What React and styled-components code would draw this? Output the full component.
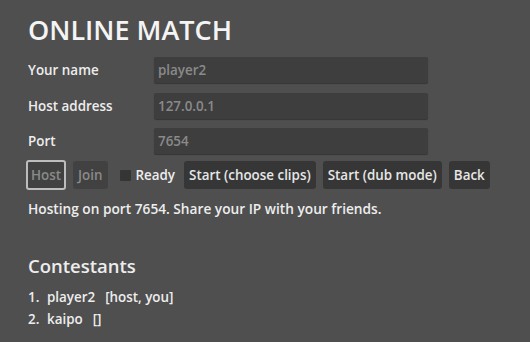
import React from 'react'
import styled, { createGlobalStyle } from 'styled-components';

const Global = createGlobalStyle`
  html, body {
    margin: 0;
    background: #4f4f4f;
    font-family: 'Open Sans', sans-serif;
    color: #ededed;
  }
`;

const Page = styled.div`
  padding: 8px 28px 0;
  display: flex;
  flex-direction: column;
`;

const Title = styled.h1`
  margin: 0 0 5px;
  font-size: 27px;
  font-weight: 600;
  line-height: 44px;
  color: #f4f4f4;
`;

const Form = styled.div`
  display: grid;
  grid-template-columns: 126px 274px;
  row-gap: 9.5px;
  align-items: center;
`;

const Label = styled.label`
  font-size: 13.4px;
  font-weight: 600;
`;

const Input = styled.input`
  height: 26px;
  box-sizing: border-box;
  border: none;
  border-radius: 2px;
  background: #3e3e3e;
  box-shadow: 0 1px 1px #353535;
  color: #8a8a8a;
  font-family: inherit;
  font-size: 13.4px;
  font-weight: 600;
  padding: 0 4px;
  outline: none;
`;

const Toolbar = styled.div`
  display: flex;
  align-items: center;
  gap: 7px;
  margin: 6px 0 0 -2px;
`;

const Button = styled.button`
  box-sizing: border-box;
  border: ${p => p.$selected ? '2px solid #bdbdbd' : 'none'};
  border-radius: 3px;
  background: ${p => p.$disabled ? '#414141' : '#363636'};
  color: ${p => p.$disabled ? '#8a8a8a' : '#e6e6e6'};
  font-family: inherit;
  font-size: 13.4px;
  font-weight: 600;
  padding: 0 ${p => p.$selected ? '3px' : '5px'};
  height: ${p => p.$selected ? '30px' : '28px'};
`;

const Check = styled.label`
  display: flex;
  align-items: center;
  gap: 5px;
  font-size: 13.4px;
  font-weight: 600;
  margin: 0 2px 0 5px;
`;

const Box = styled.span`
  width: 11px;
  height: 11px;
  background: #353535;
  border-radius: 1px;
`;

const Status = styled.p`
  margin: 9px 0 0;
  font-size: 13.7px;
  font-weight: 600;
`;

const SubTitle = styled.h2`
  margin: 35px 0 10px;
  font-size: 18.5px;
  font-weight: 600;
`;

const List = styled.ol`
  margin: 0;
  padding: 0;
  list-style: none;
  display: flex;
  flex-direction: column;
  gap: 4px;
  font-size: 13.4px;
  font-weight: 600;
`;

const Item = styled.li`
  display: flex;
`;

const Num = styled.span`
  width: 19px;
`;

const Tag = styled.span`
  margin-left: 10px;
`;

const contestants = [
  { name: 'player2', tags: 'host, you' },
  { name: 'kaipo', tags: '' },
];

const App = () => (
  <>
    <Global />
    <Page>
      <Title>ONLINE MATCH</Title>
      <Form>
        <Label>Your name</Label>
        <Input defaultValue="player2" />
        <Label>Host address</Label>
        <Input defaultValue="127.0.0.1" />
        <Label>Port</Label>
        <Input defaultValue="7654" />
      </Form>
      <Toolbar>
        <Button $selected $disabled>Host</Button>
        <Button $disabled>Join</Button>
        <Check><Box />Ready</Check>
        <Button>Start (choose clips)</Button>
        <Button>Start (dub mode)</Button>
        <Button>Back</Button>
      </Toolbar>
      <Status>Hosting on port 7654. Share your IP with your friends.</Status>
      <SubTitle>Contestants</SubTitle>
      <List>
        { contestants.map((c, i) => (
          <Item key={c.name}>
            <Num>{ i + 1 }.</Num>
            <span>{ c.name }<Tag>[{ c.tags }]</Tag></span>
          </Item>
        )) }
      </List>
    </Page>
  </>
);

export default App;
